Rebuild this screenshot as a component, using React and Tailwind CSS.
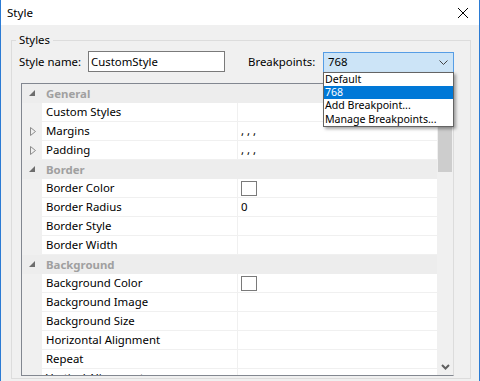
import React from 'react';

const FONT = { fontFamily: '"Segoe UI", "Noto Sans", "Open Sans", sans-serif' };

const rows = [
    { type: 'header', name: 'General' },
    { name: 'Custom Styles' },
    { name: 'Margins', collapsed: true, value: ', , ,' },
    { name: 'Padding', collapsed: true, value: ', , ,' },
    { type: 'header', name: 'Border' },
    { name: 'Border Color', swatch: true },
    { name: 'Border Radius', value: '0' },
    { name: 'Border Style' },
    { name: 'Border Width' },
    { type: 'header', name: 'Background' },
    { name: 'Background Color', swatch: true },
    { name: 'Background Image' },
    { name: 'Background Size' },
    { name: 'Horizontal Alignment' },
    { name: 'Repeat' },
    { name: 'Vertical Alignment' },
];

const ExpandedGlyph = () => (
    <svg width="7" height="7" viewBox="0 0 7 7">
        <polygon points="6,0 6,6 0,6" fill="#6d6d6d" />
    </svg>
);

const CollapsedGlyph = () => (
    <svg width="6" height="9" viewBox="0 0 6 9">
        <polygon points="0.5,0.5 5.5,4.5 0.5,8.5" fill="none" stroke="#8c8c8c" strokeWidth="1" />
    </svg>
);

const GridRow = ({ row }) => {
    if (row.type === 'header') {
        return (
            <div className="flex h-[19px] shrink-0 items-center bg-[#ededed]">
                <div className="flex w-[20px] shrink-0 items-center justify-center pl-[1px]">
                    <ExpandedGlyph />
                </div>
                <span className="pl-[4px] text-[11.4px] font-bold text-[#a0a0a0]">{row.name}</span>
            </div>
        );
    }
    return (
        <div className="flex h-[19px] shrink-0">
            <div className="flex w-[20px] shrink-0 items-center justify-center bg-[#f0f0f0] pl-[2px]">
                {row.collapsed && <CollapsedGlyph />}
            </div>
            <div className="flex flex-1 border-b border-[#f0f0f0] bg-white">
                <div className="flex w-[196px] shrink-0 items-center border-r border-[#f0f0f0] pl-[4px] text-[11.4px] text-black">
                    {row.name}
                </div>
                <div className="flex flex-1 items-center pl-[3px] text-[11.4px] text-black">
                    {row.swatch && <div className="h-[15px] w-[16px] border border-[#7a7a7a] bg-white" />}
                    {row.value}
                </div>
            </div>
        </div>
    );
};

export default function App() {
    return (
        <div style={FONT} className="flex h-[381px] w-[480px] flex-col overflow-hidden border-x border-[#2b7bd4] bg-[#f0f0f0]">
            {/* title bar */}
            <div className="flex h-[25px] shrink-0 items-center justify-between bg-white pl-[6px] pr-[10px]">
                <span className="text-[11.6px] text-black">Style</span>
                <svg width="12" height="12" viewBox="0 0 12 12">
                    <path d="M1 1 L11 11 M11 1 L1 11" stroke="#000" strokeWidth="1" />
                </svg>
            </div>

            {/* group box */}
            <div className="relative ml-[10px] mr-[8px] mt-[15px] h-[339px] shrink-0 border border-[#dcdcdc] pl-[7px] pt-[10px]">
                <span className="absolute left-[4px] top-[-9px] bg-[#f0f0f0] px-[3px] text-[11.4px] leading-[16px] text-black">Styles</span>

                <div className="flex h-[21px] items-center">
                    <span className="w-[69px] text-[11.4px] text-black">Style name:</span>
                    <div className="flex h-[21px] w-[137px] items-center border border-[#7a7a7a] bg-white pl-[2px] text-[11.4px] text-black">CustomStyle</div>
                    <span className="ml-[23px] w-[75px] text-[11.4px] text-black">Breakpoints:</span>
                    <div className="relative mt-[1px] flex h-[21px] w-[131px] items-center justify-between border border-[#569de5] bg-[#cce4f7] pl-[4px] pr-[5px] text-[11.4px] text-black">
                        768
                        <svg width="9" height="5" viewBox="0 0 9 5">
                            <path d="M0.5 0.5 L4.5 4.5 L8.5 0.5" fill="none" stroke="#444" strokeWidth="1" />
                        </svg>
                        {/* open dropdown */}
                        <div className="absolute left-[-1px] top-[19px] z-10 w-[131px] border border-[#646464] bg-white shadow-[2px_2px_3px_rgba(0,0,0,0.35)]">
                            {['Default', '768', 'Add Breakpoint...', 'Manage Breakpoints...'].map((item) => (
                                <div
                                    key={item}
                                    className={`pl-[1px] text-[10.6px] leading-[13.4px] whitespace-nowrap ${item === '768' ? 'bg-[#0078d7] text-white' : 'text-black'}`}
                                >
                                    {item}
                                </div>
                            ))}
                        </div>
                    </div>
                </div>

                {/* property grid */}
                <div className="ml-[2px] mt-[11px] flex h-[293px] w-[433px] border border-[#828790] border-r-[#dcdcdc]">
                    <div className="flex flex-1 flex-col overflow-hidden bg-white">
                        {rows.map((row) => (
                            <GridRow key={row.name} row={row} />
                        ))}
                    </div>
                    {/* scrollbar */}
                    <div className="flex w-[16px] shrink-0 flex-col bg-[#f0f0f0]">
                        <div className="h-[17px] shrink-0" />
                        <div className="mx-[1px] h-[71px] shrink-0 bg-[#cdcdcd]" />
                        <div className="flex-1" />
                        <div className="flex h-[17px] shrink-0 items-center justify-center">
                            <svg width="9" height="6" viewBox="0 0 9 6">
                                <path d="M1 1 L4.5 4.5 L8 1" fill="none" stroke="#606060" strokeWidth="2" />
                            </svg>
                        </div>
                    </div>
                </div>
            </div>
        </div>
    );
}
